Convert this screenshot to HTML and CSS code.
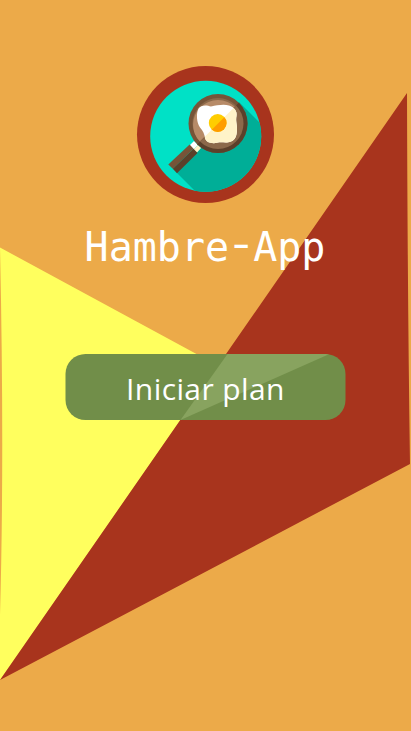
FILE: index.html
```html
<!DOCTYPE html>
<html lang="es">
<head>
<meta charset="utf-8">
<title>Hambre-App</title>
<link rel="stylesheet" href="styles.css">
</head>
<body>
<main class="screen">
  <svg class="backdrop" viewBox="0 0 411 731" aria-hidden="true">
    <path fill="#ffff5e" d="M0 247.500L226 370L180 421L0 680V615Q4.500 455 0 247.500Z"/>
    <path fill="#a8341d" d="M407 93Q407.500 290 410 464L0 680Z"/>
  </svg>
  <svg class="logo" viewBox="130 60 150 150" aria-hidden="true">
    <defs>
      <clipPath id="dish"><circle cx="205.700" cy="136.200" r="55.500"/></clipPath>
      <clipPath id="shade"><path d="M130 211.500L281.500 60H290V220H130Z"/></clipPath>
      <path id="egg" d="M198.500 108.500C201 104.500 207 105 211 106.500C217 105.500 223 104 229 105.500C234 107 237.500 111 236.500 116C235.500 121 237 124 237 129C237 134 236 140 231 141.500C226 143.500 222 141.500 218 142.500C213 144 206 143 205 138C204.500 134 203 131 200 127.500C196.500 123 196 113 198.500 108.500Z"/>
    </defs>
    <circle cx="205.500" cy="134.500" r="68.500" fill="#a8341d"/>
    <g clip-path="url(#dish)">
      <rect x="145" y="75" width="120" height="120" fill="#00e1c6"/>
      <path fill="#00ae97" d="M239 102L290 153V220H224L176.500 172.500L200 149Z"/>
    </g>
    <path fill="#fff" d="M189.500 145.500L194 141L198 145L193.500 149.500Z"/>
    <path fill="#fff3c8" d="M193.500 149.500L198 145L201 148L197 152.500Z"/>
    <path fill="#765438" d="M168.300 164.500L189.600 144.500L193.500 148.800L172.800 168.800Z"/>
    <path fill="#5b402a" d="M172.800 168.800L193.500 148.800L197.500 153L177 173.200Z"/>
    <circle cx="218" cy="123.500" r="29.500" fill="#765438"/>
    <circle cx="218" cy="123.500" r="25.500" fill="#8c694a"/>
    <circle cx="218" cy="125" r="25" fill="#b78b68" clip-path="url(#pan)"/>
    <g clip-path="url(#shade)">
      <circle cx="218" cy="123.500" r="29.500" fill="#5b402a"/>
      <circle cx="218" cy="123.500" r="25.500" fill="#8c694a"/>
    </g>
    <clipPath id="pan"><circle cx="218" cy="123.500" r="25.500"/></clipPath>
    <use href="#egg" fill="#fff"/>
    <use href="#egg" fill="#fff3c8" clip-path="url(#shade)"/>
    <circle cx="217.700" cy="123" r="8.900" fill="#ffcd00"/>
    <circle cx="217.700" cy="123" r="8.900" fill="#ff9c00" clip-path="url(#shade)"/>
  </svg>
  <h1 class="title">Hambre<span class="dash">-</span>App</h1>
  <button class="start" type="button">
    <svg class="sheen" viewBox="0 0 280 66" aria-hidden="true"><path fill="#88a35f" d="M162 0H264L115 66Z"/></svg>
    <span class="label">Iniciar plan</span>
  </button>
</main>
</body>
</html>
```
FILE: styles.css
```css
body {
  margin: 0;
  background: #ecaa49;
}

.screen {
  position: relative;
  display: flex;
  flex-direction: column;
  align-items: center;
  box-sizing: border-box;
  width: 411px;
  height: 731px;
  padding: 60px 1px 0 0;
  overflow: hidden;
}

.backdrop {
  position: absolute;
  inset: 0;
}

.logo {
  position: relative;
  width: 150px;
  height: 150px;
  flex: none;
}

.title {
  position: relative;
  margin: 12px 0 0;
  font: 400 40px/50px "DejaVu Sans Mono", monospace;
  color: #fff;
}

.dash {
  display: inline-block;
  line-height: 1;
  transform: translateY(-3px) scaleX(1.3);
}

.start {
  position: relative;
  width: 280px;
  height: 66px;
  margin-top: 82px;
  padding: 0;
  border: 0;
  border-radius: 20px;
  overflow: hidden;
  background: #718e49;
  color: #fff;
  font: 400 30px/66px "Open Sans", sans-serif;
  letter-spacing: 0.4px;
  transform: translateX(0.5px);
}

.sheen {
  position: absolute;
  inset: 0;
}

.label {
  position: relative;
  display: block;
  padding-top: 2px;
}
```
